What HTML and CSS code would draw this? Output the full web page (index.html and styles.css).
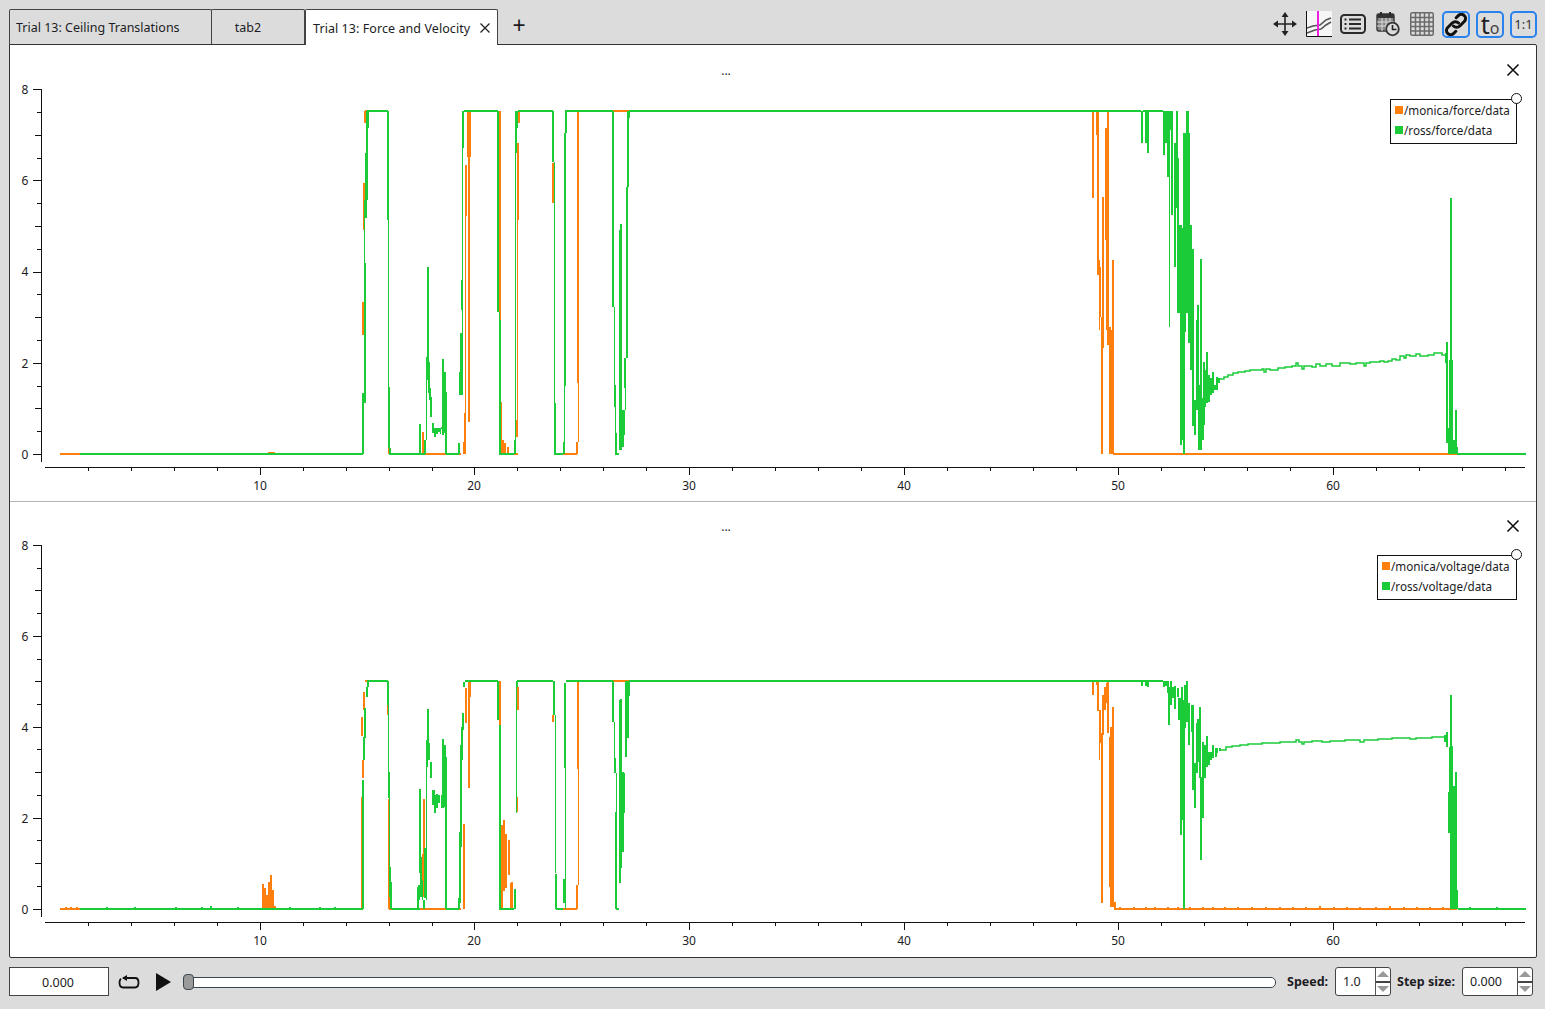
FILE: index.html
```html
<!DOCTYPE html>
<html lang="en">
<head>
    <meta charset="UTF-8">
    <title>PlotJuggler</title>
    <link rel="stylesheet" href="styles.css">
</head>
<body>

    <div class="topbar">
        <div class="tab tab-first"><span class="tab-text">Trial 13: Ceiling Translations</span></div>
        <div class="tab tab-second"><span class="tab-text">tab2</span></div>
        <div class="tab tab-active">Trial 13: Force and Velocity
            <svg class="tab-close" width="10" height="10" viewBox="0 0 10 10"><path d="M0.5 0.5L9.5 9.5M9.5 0.5L0.5 9.5"/></svg>
        </div>
        <div class="tab-add">+</div>

        <div class="tools">
            <!-- move -->
            <svg class="tool tool-move" width="26" height="26" viewBox="0 0 26 26">
                <path d="M13 3V23M3 13H23" class="ic-line"/>
                <path d="M13 1L9.5 6H16.5ZM13 25L9.5 20H16.5ZM1 13L6 9.5V16.5ZM25 13L20 9.5V16.5Z" class="ic-fill"/>
            </svg>
            <!-- plot with cursor -->
            <svg class="tool tool-plot" width="26" height="26" viewBox="0 0 26 26">
                <rect x="1" y="0" width="25" height="25" fill="#f6f6f6"/>
                <path d="M1 17L7 15L14 14L20 9L25 7M1 22L9 19L15 18L20 14L25 11" class="ic-thin"/>
                <path d="M0.5 0V25.5H26" class="ic-axis"/>
                <path d="M12 0V25" class="ic-cursor"/>
            </svg>
            <!-- list -->
            <svg class="tool tool-list" width="26" height="20" viewBox="0 0 26 20">
                <rect x="1" y="1" width="24" height="18" rx="3.5" class="ic-box"/>
                <path d="M9 5.5H21M9 10H21M9 14.5H21M4.5 5.5H6.5M4.5 10H6.5M4.5 14.5H6.5" class="ic-rows"/>
            </svg>
            <!-- calendar -->
            <svg class="tool tool-cal" width="24" height="26" viewBox="0 0 24 26">
                <rect x="1" y="3" width="17" height="17" rx="1.5" fill="#8a8a8a" stroke="#333" stroke-width="1.4"/>
                <rect x="1" y="3" width="17" height="4" fill="#333"/>
                <path d="M5 1V5M14 1V5" class="ic-rows"/>
                <path d="M1 11H18M1 15H18M6 7V20M10 7V20M14 7V20" stroke="#ddd" fill="none"/>
                <circle cx="16.5" cy="18" r="6.3" fill="#dcdcdc" stroke="#333" stroke-width="1.8"/>
                <path d="M16.5 14V18.5H20.5" class="ic-clock"/>
            </svg>
            <!-- grid -->
            <svg class="tool tool-grid" width="24" height="24" viewBox="0 0 24 24">
                <rect x="0.75" y="0.75" width="22.5" height="22.5" rx="1.5" class="ic-grid"/>
                <path d="M5.5 1V23M10 1V23M14.5 1V23M19 1V23M1 5.5H23M1 10H23M1 14.5H23M1 19H23" class="ic-grid"/>
            </svg>
            <div class="tool-btn tool-link">
                <svg width="24" height="23" viewBox="0 0 24 23">
                    <path d="M9.5 13C11.2 14.8 14 14.8 15.8 13L20.3 8.5C22 6.8 22 4.2 20.3 2.6C18.6 0.9 16 0.9 14.3 2.6L12.2 4.7" class="ic-chain"/>
                    <path d="M14.5 10C12.8 8.2 10 8.2 8.2 10L3.7 14.5C2 16.2 2 18.8 3.7 20.4C5.4 22.1 8 22.1 9.7 20.4L11.8 18.3" class="ic-chain"/>
                </svg>
            </div>
            <div class="tool-btn tool-zero"><span class="zero-t">t</span><span class="zero-o">o</span></div>
            <div class="tool-btn tool-ratio">1:1</div>
        </div>
    </div>

    <div class="panel">
        <!-- force -->
        <div class="plot plot-top">
            <svg class="chart" width="1527" height="456" viewBox="10 45 1527 456">
                <path class="thin orange" d="M465.5 413V216M500.5 323V402M517.5 220V420M578.5 383V442M1099.5 260V330M1106.5 240V330M1111.5 330V454"/>
                <path class="thick orange" d="M60 454H363M363 302V335M364 183V230M365 111V123M365 111H388M389 425V454M389 454H461M268 453H275M423 432V454M464 442V454M465 413V454M466 165V216M468 111V157M469 111V422M470 111V157M466 111H498M500 111V323M501 402V454M502 454H518M503 440V454M505 443V454M508 447V454M517 420V437M518 143V220M519 111V123M519 111H553M553 163V203M556 454H577M577 442V454M578 111V383M566 111H1093M1093 111V198M1097 111V135M1098 111V275M1100 267V317M1102 317V454M1103 197V348M1106 128V240M1108 111V345M1110 327V454M1113 260V454M1113 454H1457"/>
                <path class="thin green" d="M364.5 400V200M388.5 220V387M426.5 440V380M440.5 428V434M462.5 395V148M499.5 312V320M515.5 440V153M554.5 162V403M564.5 442V386M565.5 386V133M614.5 307V385M615.5 407V433M625.5 358V410M1169.5 111V327M1449.5 360V430"/>
                <path class="thick green" d="M80 454H363M363 454V393M365 403V263M366 218V153M367 200V111M368 128V111H388M388 111V220M389 387V448M390 448V454H420M420 454V424M420 454H425M425 454V440M427 380V357M428 380V267M429 362V393M430 388V400M431 397V417M433 423V433M435 428V437M437 428V434M439 428V432M441 428H443M443 359V435M445 372V433M446 392V454M446 454H459M459 454V443M460 395V372M461 395V333M462 310V280M463 148V111M464 111H498M498 111V312M500 320V454H514M515 454V440M516 153V111M517 128V111M518 111H553M553 111V162M555 403V454H563M564 454V442M565 386V133M566 133V111H613M613 111V307M615 385V407M616 433V454H619M620 450V230M621 450V224M623 410V447M624 410V435M625 388V358M627 358V187M628 187V111M629 111V118M629 111H1141M1143 111H1163M1142 111V143M1146 111V143M1148 111V153M1164 111V155M1166 111V143M1168 111V177M1170 111V130M1172 111V215M1175 143V267M1177 111V208M1178 158V313M1180 225V313M1181 225V445M1183 228V440M1184 133V454M1185 133V332M1187 111V313M1188 111V200M1189 133V343M1191 225V370M1193 249V426M1195 400V435M1197 320V410M1198 305V393M1199 385V450M1201 259V450M1203 398V440M1204 362V425M1205 370V407M1207 352V403M1209 375V402M1211 378V395M1213 372V393M1215 385V390M1217 377V390M1219 378V383M1446 353V363M1447 342V443M1449 428V454M1451 198V454M1452 360V454M1454 440V454M1456 410V454M1457 447V454M1457 454H1526"/>
                <path class="curve green" d="M1220 379H1224V377H1228V375H1233V373H1238V372H1245V371H1250V370H1262V369H1264V372H1266V369H1270V370H1278V368H1285V367H1292V366H1296V363H1298V366H1302V369H1304V366H1312V367H1316V364H1320V366H1326V364H1332V366H1340V363H1350V364H1356V363H1364V366H1366V363H1370V362H1380V361H1384V362H1388V361H1392V359H1396V360H1400V356H1404V358H1406V355H1410V356H1416V354H1420V356H1428V355H1434V353H1442V355H1445"/>
                <g class="axis">
                    <path d="M45 467.5H1525M41.5 89V462"/>
                    <path d="M33 89.5H41M37 112.5H41M35 135.5H41M37 158.5H41M33 180.5H41M37 203.5H41M35 226.5H41M37 249.5H41M33 272.5H41M37 294.5H41M35 317.5H41M37 340.5H41M33 363.5H41M37 386.5H41M35 408.5H41M37 431.5H41M33 454.5H41"/>
                    <path d="M88.5 467V471M131.5 467V471M174.5 467V471M217.5 467V471M260.5 467V475M303.5 467V471M346.5 467V471M389.5 467V471M432.5 467V471M474.5 467V475M517.5 467V471M560.5 467V471M603.5 467V471M646.5 467V471M689.5 467V475M732.5 467V471M775.5 467V471M818.5 467V471M861.5 467V471M904.5 467V475M947.5 467V471M990.5 467V471M1033.5 467V471M1076.5 467V471M1118.5 467V475M1161.5 467V471M1204.5 467V471M1247.5 467V471M1290.5 467V471M1333.5 467V475M1376.5 467V471M1419.5 467V471M1462.5 467V471M1505.5 467V471"/>
                </g>
                <g class="labels">
                    <text x="25" y="94">8</text><text x="25" y="185">6</text><text x="25" y="276">4</text><text x="25" y="368">2</text><text x="25" y="459">0</text>
                    <text x="260" y="490">10</text><text x="474" y="490">20</text><text x="689" y="490">30</text><text x="904" y="490">40</text><text x="1118" y="490">50</text><text x="1333" y="490">60</text>
                    <text x="726" y="75">...</text>
                </g>
                <path class="close" d="M1507.5 64.5L1518.5 75.5M1518.5 64.5L1507.5 75.5"/>
            </svg>
            <div class="legend legend-force">
                <div class="legend-row"><span class="swatch swatch-orange"></span>/monica/force/data</div>
                <div class="legend-row"><span class="swatch swatch-green"></span>/ross/force/data</div>
                <span class="legend-handle"></span>
            </div>
        </div>

        <!-- voltage -->
        <div class="plot plot-bottom">
            <svg class="chart" width="1527" height="455" viewBox="10 502 1527 455">
                <path class="thin orange" d="M578.5 769V885M1099.5 735V760M1112.5 730V900"/>
                <path class="thick orange" d="M60 909H363M66 907V909M71 907V909M77 907V909M362 797V909M362 717V736M363 760V778M364 692V710M365 681H388M388 705V715M389 799V909M389 909H461M263 884V909M265 888V909M267 895V909M269 882V909M271 875V909M273 890V909M275 906V909M423 854V888M424 799V897M464 824V909M466 688V723M469 681V788M470 681V697M466 681H498M500 681V725M502 825V909M504 820V891M506 834V888M509 840V875M511 883V909M512 882V909M517 797V812M518 687V710M519 681H553M553 715V722M556 909H577M577 885V909M578 681V769M566 681H1093M1093 681V695M1097 681V685M1098 681V711M1100 710V743M1102 733V903M1103 695V735M1105 687V710M1107 683V703M1108 681V733M1110 737V887M1111 727V907M1113 707V907M1115 902V908M1114 909H1457M1120 907V909M1134 907V909M1146 907V909M1155 907V909M1168 907V909M1178 907V909M1190 907V909M1203 907V909M1213 907V909M1225 907V909M1238 907V909M1252 907V909M1266 907V909M1280 907V909M1293 907V909M1306 907V909M1320 906V909M1334 907V909M1347 907V909M1360 907V909M1376 907V909M1390 906V909M1404 907V909M1417 907V909M1430 907V909M1443 907V909"/>
                <path class="thin green" d="M388.5 705V772M389.5 798V867M422.5 880V900M426.5 760V900M461.5 740V760M516.5 813V681M555.5 715V873M565.5 768V909M614.5 722V758M616.5 773V812M1449.5 747V800"/>
                <path class="thick green" d="M80 909H363M211 906V909M94 908V909M107 907V909M120 908V909M135 907V909M148 908V909M160 908V909M176 907V909M190 908V909M202 907V909M224 908V909M238 907V909M252 908V909M290 907V909M306 908V909M320 907V909M335 907V909M350 908V909M363 909V780M364 760V737M365 738V708M367 697V687M368 687V681H388M388 681V705M389 772V798M390 867V897M391 882V909M392 909H420M418 887V909M419 885V900M420 789V873M421 857V897M424 900V909M425 848V898M427 740V767M428 709V750M429 743V760M431 762V778M433 790V805M434 790V803M435 795V813M437 794V808M439 795V803M442 795V808M443 739V808M445 745V807M446 757V909M446 909H459M459 898V909M460 832V903M461 745V847M462 727V760M463 713V730M464 682V687M465 681H498M498 681V720M500 725V909H514M515 889V909M517 681V687M517 681H553M554 681V715M556 874V909M556 909H563M564 879V903M565 683V768M566 681H613M613 681V722M615 758V773M616 812V909M616 909H619M620 700V883M621 699V868M623 772V852M624 773V813M626 681V757M628 681V738M629 681V696M629 681H1163M1142 681V686M1146 681V686M1148 681V687M1164 681V687M1166 681V686M1168 681V693M1169 687V725M1171 681V705M1173 687V698M1175 686V709M1178 688V697M1179 698V720M1181 698V835M1182 687V820M1184 700V909M1185 685V728M1187 681V722M1189 703V745M1192 705V732M1193 705V790M1195 763V808M1197 723V773M1198 719V762M1200 707V778M1201 777V860M1203 742V818M1205 745V778M1207 736V767M1209 752V765M1211 752V760M1213 745V758M1216 748V757M1217 748V753M1220 748V751M1445 735V742M1447 732V747M1449 792V833M1451 695V909M1452 746V909M1454 786V909M1456 772V909M1457 890V909M1458 909H1526M1470 907V909M1484 908V909M1497 907V909M1512 908V909"/>
                <path class="curve green" d="M1220 750H1226V747H1232V746H1240V745H1248V744H1262V743H1280V742H1296V740H1299V742H1302V744H1304V742H1312V741H1322V742H1330V741H1345V740H1360V742H1364V740H1378V739H1392V738H1410V739H1416V738H1432V737H1444"/>
                <g class="axis">
                    <path d="M45 922.5H1525M41.5 545V917"/>
                    <path d="M33 545.5H41M37 568.5H41M35 590.5H41M37 613.5H41M33 636.5H41M37 659.5H41M35 681.5H41M37 704.5H41M33 727.5H41M37 749.5H41M35 772.5H41M37 795.5H41M33 818.5H41M37 840.5H41M35 863.5H41M37 886.5H41M33 909.5H41"/>
                    <path d="M88.5 922V926M131.5 922V926M174.5 922V926M217.5 922V926M260.5 922V930M303.5 922V926M346.5 922V926M389.5 922V926M432.5 922V926M474.5 922V930M517.5 922V926M560.5 922V926M603.5 922V926M646.5 922V926M689.5 922V930M732.5 922V926M775.5 922V926M818.5 922V926M861.5 922V926M904.5 922V930M947.5 922V926M990.5 922V926M1033.5 922V926M1076.5 922V926M1118.5 922V930M1161.5 922V926M1204.5 922V926M1247.5 922V926M1290.5 922V926M1333.5 922V930M1376.5 922V926M1419.5 922V926M1462.5 922V926M1505.5 922V926"/>
                </g>
                <g class="labels">
                    <text x="25" y="550">8</text><text x="25" y="641">6</text><text x="25" y="732">4</text><text x="25" y="823">2</text><text x="25" y="914">0</text>
                    <text x="260" y="945">10</text><text x="474" y="945">20</text><text x="689" y="945">30</text><text x="904" y="945">40</text><text x="1118" y="945">50</text><text x="1333" y="945">60</text>
                    <text x="726" y="531">...</text>
                </g>
                <path class="close" d="M1507.5 520.5L1518.5 531.5M1518.5 520.5L1507.5 531.5"/>
            </svg>
            <div class="legend legend-voltage">
                <div class="legend-row"><span class="swatch swatch-orange"></span>/monica/voltage/data</div>
                <div class="legend-row"><span class="swatch swatch-green"></span>/ross/voltage/data</div>
                <span class="legend-handle"></span>
            </div>
        </div>
    </div>

    <div class="playbar">
        <div class="time-box">0.000</div>
        <svg class="loop-icon" width="22" height="14" viewBox="0 0 22 14">
            <path d="M5 3H17C19.2 3 20.5 4.6 20.5 7.5C20.5 10.4 19.2 12.5 17 12.5H5C2.8 12.5 1.5 10.4 1.5 7.5C1.5 5.8 2 4.6 3 3.8"/>
            <path class="loop-head" d="M9 0L4 3L9 6Z"/>
        </svg>
        <svg class="play-icon" width="15" height="18" viewBox="0 0 15 18"><path d="M0 0L15 9L0 18Z"/></svg>
        <div class="slider">
            <div class="slider-groove"></div>
            <div class="slider-handle"></div>
        </div>
        <div class="field-label label-speed">Speed:</div>
        <div class="spin spin-speed">
            <div class="spin-value">1.0</div>
            <div class="spin-arrows">
                <div class="spin-btn"><span class="arrow-up"></span></div>
                <div class="spin-btn spin-btn-down"><span class="arrow-down"></span></div>
            </div>
        </div>
        <div class="field-label label-step">Step size:</div>
        <div class="spin spin-step">
            <div class="spin-value">0.000</div>
            <div class="spin-arrows">
                <div class="spin-btn"><span class="arrow-up"></span></div>
                <div class="spin-btn spin-btn-down"><span class="arrow-down"></span></div>
            </div>
        </div>
    </div>

</body>
</html>
```

FILE: styles.css
```css
* {
    box-sizing: border-box;
}
html, body {
    height: 100%;
}
body {
    margin: 0;
    background-color: #dcdcdc;
    color: #1c1c24;
    font-family: "Noto Sans", "Open Sans", sans-serif;
    font-size: 12.5px;
    overflow: hidden;
}

/* tab bar */
.topbar {
    display: flex;
    align-items: flex-end;
    height: 45px;
    padding-left: 9px;
    padding-right: 8px;
}
.tab {
    display: flex;
    align-items: center;
    height: 36px;
    border: 1px solid #444;
    border-bottom: none;
    border-radius: 2px 2px 0 0;
    background-color: #dcdcdc;
    white-space: nowrap;
}
.tab-text {
    padding-bottom: 1px;
}
.tab-first {
    width: 203px;
    padding-left: 6px;
}
.tab-second {
    width: 94px;
    justify-content: center;
    margin-left: -1px;
    padding-right: 20px;
}
.tab-active {
    position: relative;
    z-index: 2;
    width: 193px;
    padding-left: 7px;
    padding-top: 1px;
    letter-spacing: 0.07px;
    background-color: #fff;
}
.tab-close {
    margin-left: 10px;
}
.tab-close path {
    stroke: #222;
    stroke-width: 1.3;
    fill: none;
}
.tab-add {
    align-self: center;
    width: 42px;
    padding-top: 5px;
    font-size: 23px;
    line-height: 23px;
    text-align: center;
}

/* toolbar icons */
.tools {
    display: flex;
    align-items: center;
    gap: 8px;
    height: 28px;
    margin-left: auto;
    margin-bottom: 7px;
}
.tool {
    display: block;
    flex: none;
}
.tool-cal {
    margin-left: 2px;
}
.tool-grid {
    margin-left: 2px;
}
.tool-btn {
    display: flex;
    align-items: center;
    justify-content: center;
    width: 28px;
    height: 27px;
    border: 2px solid #2a82ef;
    border-radius: 5px;
}
.tool-zero {
    margin-left: -2px;
}
.zero-t {
    font-size: 25px;
    line-height: 23px;
    color: #222;
}
.zero-o {
    align-self: flex-end;
    font-size: 16px;
    line-height: 16px;
    color: #444;
}
.tool-ratio {
    width: 27px;
    margin-left: -2px;
    font-size: 13px;
    color: #333;
}
.ic-line {
    stroke: #222;
    stroke-width: 1.6;
    fill: none;
}
.ic-fill {
    fill: #222;
}
.ic-thin {
    stroke: #555;
    stroke-width: 1.6;
    fill: none;
}
.ic-axis {
    stroke: #111;
    stroke-width: 1;
    fill: none;
}
.ic-cursor {
    stroke: #f01ee0;
    stroke-width: 2;
}
.ic-box {
    stroke: #2a2a2a;
    stroke-width: 2;
    fill: none;
}
.ic-rows {
    stroke: #2a2a2a;
    stroke-width: 2;
    fill: none;
}
.ic-clock {
    stroke: #222;
    stroke-width: 1.6;
    fill: none;
}
.ic-grid {
    stroke: #6a6a6a;
    stroke-width: 1.5;
    fill: none;
}
.ic-chain {
    stroke: #111;
    stroke-width: 3;
    fill: none;
    stroke-linecap: round;
}

/* plots */
.panel {
    position: relative;
    z-index: 1;
    height: 914px;
    margin: -1px 8px 0 9px;
    border: 1px solid #333;
    border-radius: 0 2px 2px 2px;
    background-color: #fff;
}
.plot {
    position: relative;
}
.plot-top {
    height: 457px;
    border-bottom: 1px solid #b4b4b4;
}
.plot-bottom {
    height: 455px;
}
.chart {
    display: block;
}
.thin, .thick {
    fill: none;
    shape-rendering: crispEdges;
}
.thin {
    stroke-width: 1;
}
.thick {
    stroke-width: 2;
}
.curve {
    fill: none;
    stroke-width: 1.5;
}
.orange {
    stroke: #ff7f0e;
}
.green {
    stroke: #1bcb38;
}
.axis path {
    stroke: #111;
    stroke-width: 1;
    fill: none;
    shape-rendering: crispEdges;
}
.labels text {
    fill: #1c1c24;
    font-family: "Noto Sans", "Open Sans", sans-serif;
    font-size: 12px;
    text-anchor: middle;
}
.close {
    stroke: #111;
    stroke-width: 1.6;
    fill: none;
}

/* legend sits on top of the chart */
.legend {
    position: absolute;
    right: 19px;
    height: 45px;
    padding: 0 0 0 4px;
    border: 1px solid #111;
    background-color: #fff;
    font-size: 11.7px;
}
.legend-force {
    top: 54px;
    width: 127px;
}
.legend-voltage {
    top: 53px;
    width: 140px;
}
.legend-row {
    display: flex;
    align-items: center;
    height: 20px;
    white-space: nowrap;
}
.swatch {
    flex: none;
    width: 8px;
    height: 8px;
    margin-right: 1px;
}
.swatch-orange {
    background-color: #ff7f0e;
}
.swatch-green {
    background-color: #1bcb38;
}
.legend-handle {
    position: absolute;
    top: -7px;
    right: -6px;
    width: 11px;
    height: 11px;
    border: 1px solid #111;
    border-radius: 50%;
    background-color: #fff;
}

/* bottom bar */
.playbar {
    display: flex;
    align-items: center;
    height: 29px;
    margin-top: 9px;
    padding-left: 9px;
}
.time-box {
    flex: none;
    width: 100px;
    height: 29px;
    padding-right: 2px;
    border: 1px solid #444;
    background-color: #fff;
    text-align: center;
    line-height: 29px;
}
.loop-icon {
    flex: none;
    margin-left: 9px;
}
.loop-icon path {
    stroke: #111;
    stroke-width: 1.8;
    fill: none;
}
.loop-icon .loop-head {
    fill: #111;
    stroke: none;
}
.play-icon {
    flex: none;
    margin-left: 16px;
}
.play-icon path {
    fill: #111;
}
.slider {
    position: relative;
    flex: none;
    width: 1093px;
    height: 29px;
    margin-left: 12px;
}
.slider-groove {
    height: 11px;
    margin-top: 10px;
    margin-left: 4px;
    border: 1px solid #3c4650;
    border-radius: 5px;
    background-color: #fff;
}
.slider-handle {
    position: absolute;
    top: 7px;
    left: 0;
    width: 11px;
    height: 16px;
    border: 1px solid #3c4650;
    border-radius: 4px;
    background-color: #9a9a9a;
}
.field-label {
    flex: none;
    font-weight: bold;
    white-space: nowrap;
}
.label-speed {
    margin-left: 11px;
    width: 48px;
}
.label-step {
    margin-left: 6px;
    width: 65px;
}
.spin {
    display: flex;
    flex: none;
    height: 29px;
    border: 1px solid #444;
    border-radius: 3px;
    background-color: #fff;
}
.spin-speed {
    width: 56px;
}
.spin-step {
    width: 71px;
}
.spin-value {
    flex: 1;
    padding-left: 7px;
    line-height: 27px;
}
.spin-arrows {
    display: flex;
    flex: none;
    flex-direction: column;
    width: 15px;
    border-left: 1px solid #555;
}
.spin-btn {
    display: flex;
    flex: 1;
    align-items: center;
    justify-content: center;
}
.spin-btn-down {
    border-top: 2px solid #444;
}
.arrow-up {
    border-left: 6px solid transparent;
    border-right: 6px solid transparent;
    border-bottom: 6px solid #999;
}
.arrow-down {
    border-left: 6px solid transparent;
    border-right: 6px solid transparent;
    border-top: 6px solid #999;
}
```
